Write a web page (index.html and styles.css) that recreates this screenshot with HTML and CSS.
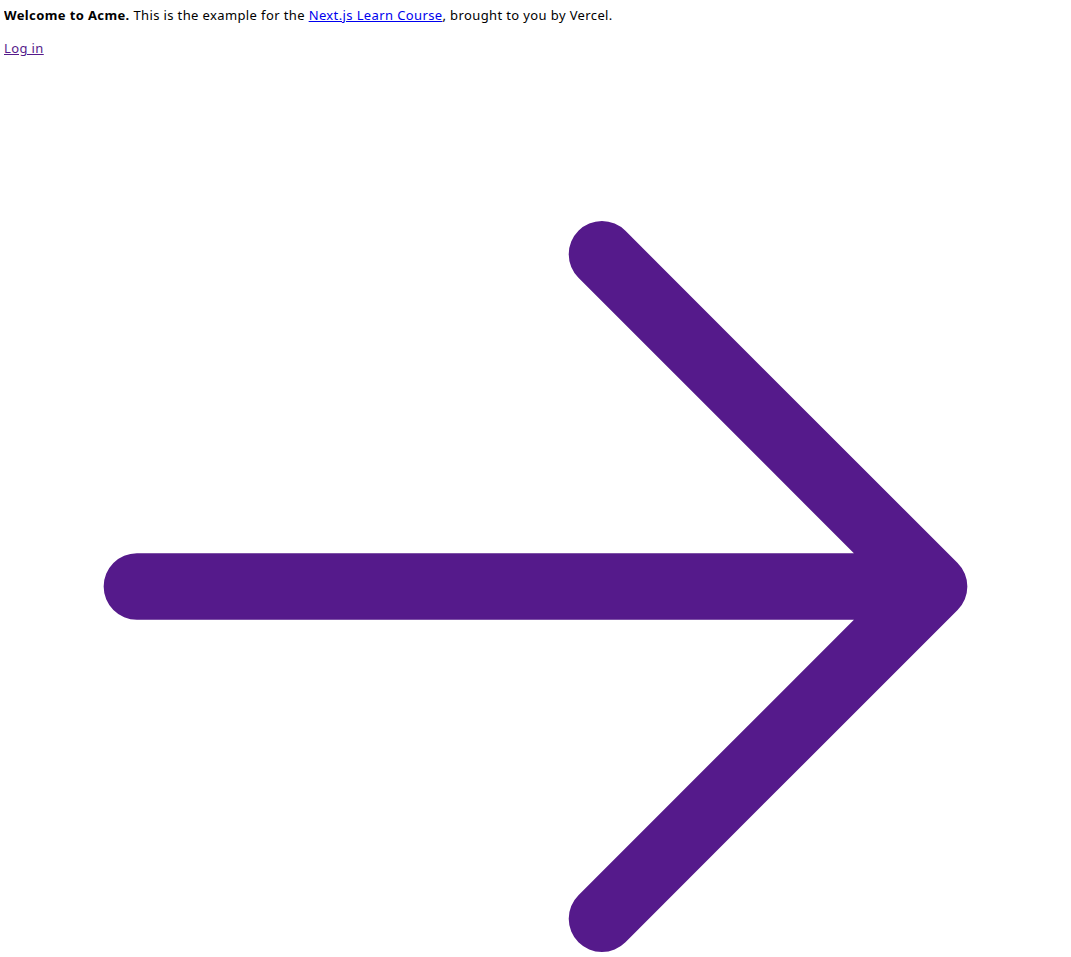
FILE: index.html
```html
<!DOCTYPE html>
<html lang="en">
<head>
<meta charset="utf-8">
<title>Acme</title>
<link rel="stylesheet" href="styles.css">
</head>
<body>
<main class="page">
  <p class="intro"><strong>Welcome to Acme.</strong> This is the example for the <a class="course" href="#">Next.js Learn Course</a>, brought to you by Vercel.</p>
  <a class="login" href="#">
    <span class="login-text">Log in</span>
    <svg class="arrow" viewBox="0 0 24 24" fill="none" stroke="currentColor" stroke-width="1.5" aria-hidden="true"><path stroke-linecap="round" stroke-linejoin="round" d="M13.5 4.5 21 12m0 0-7.5 7.5M21 12H3"/></svg>
  </a>
</main>
</body>
</html>
```
FILE: styles.css
```css
html, body {
  background: #fff;
}
body {
  margin: 4px;
  font-family: "Noto Sans", "Noto Sans CJK KR", sans-serif;
  font-size: 13px;
  letter-spacing: 0.38px;
  color: #000;
}
.page {
  display: flex;
  flex-direction: column;
  padding-top: 2px;
}
.intro {
  margin: 0;
  line-height: 18px;
}
.intro strong {
  font-weight: 700;
}
.course {
  color: #0000ee;
  text-decoration: underline;
}
.login {
  margin-top: 17px;
  color: #551a8b;
  text-decoration: none;
  display: flex;
  flex-direction: column;
}
.login-text {
  line-height: 14px;
  text-decoration: underline;
  align-self: flex-start;
}
.arrow {
  display: block;
  width: 100%;
}
```
